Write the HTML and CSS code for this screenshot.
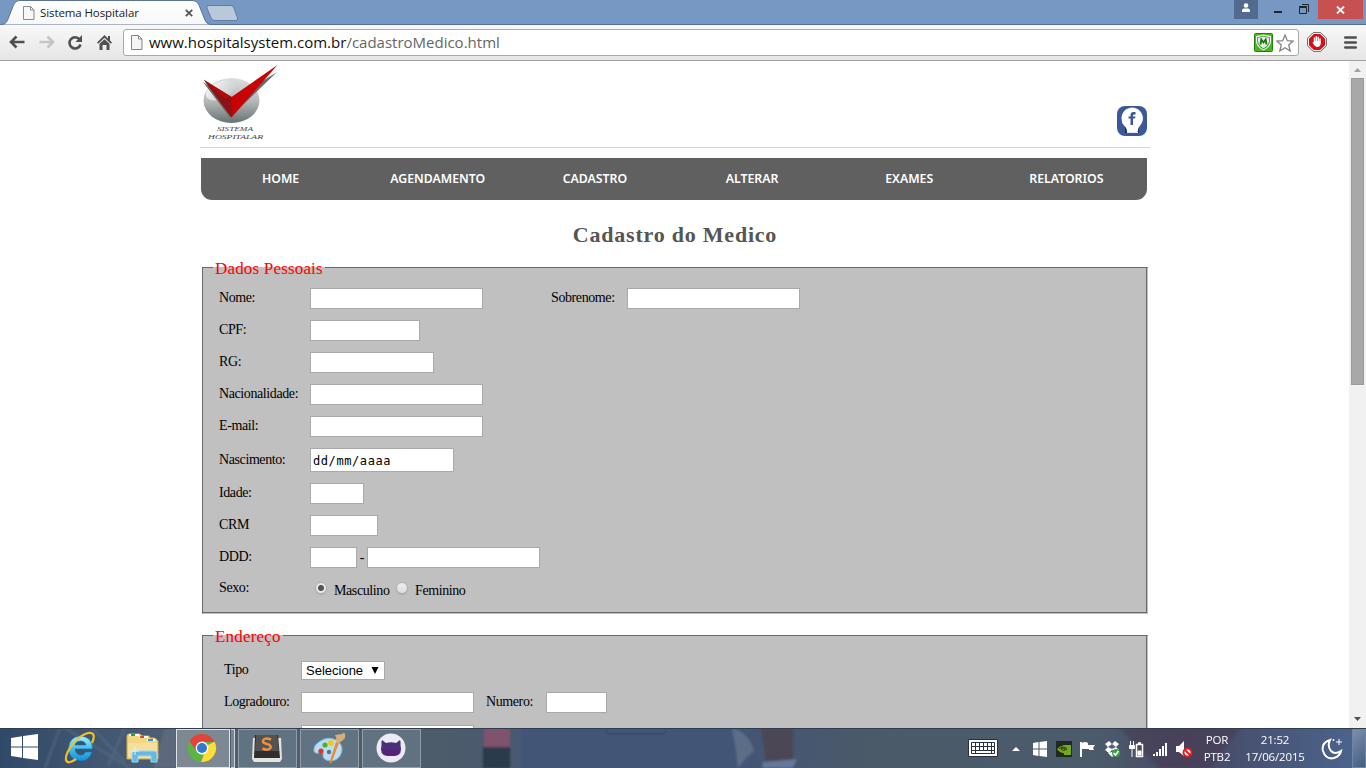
FILE: index.html
```html
<!DOCTYPE html>
<html lang="pt-BR">
<head>
<meta charset="utf-8">
<title>Sistema Hospitalar</title>
<link rel="stylesheet" href="styles.css">
</head>
<body>
<div class="screen">
  <header class="titlebar">
    <div class="tab">
      <svg class="tab-shape" width="240" height="25" viewBox="0 0 240 25">
        <defs><linearGradient id="tabfill" x1="0" y1="0" x2="0" y2="1"><stop offset="0" stop-color="#fff"/><stop offset="1" stop-color="#f7f7f7"/></linearGradient></defs>
        <path d="M0 25 V24.500 C5 24.500 6.500 23 8 19 L13.500 5 Q15.500 .5 19 .5 H193 Q197 .5 199 5 L204.500 19 Q206.500 24.500 211 24.500 V25Z" fill="url(#tabfill)" stroke="#5a7396"/>
        <path d="M208 5.500 H231 Q233 5.500 234 8 L237.500 18 Q238 20.500 236 20.500 H215 Q212 20.500 211 18 L207 8 Q206.500 5.500 208 5.500Z" fill="#b9c8da" stroke="#617da4"/>
      </svg>
      <svg class="tab-page" width="12" height="14" viewBox="0 0 12 14"><path d="M.5.500H7.500L11 4V13.500H.5ZM7.500.500V4H11" fill="#f7f7f7" stroke="#8a8a8a"/></svg>
      <span class="tab-title">Sistema Hospitalar</span>
      <svg class="tab-close" width="8" height="8" viewBox="0 0 8 8"><path d="M.8.8 7.200 7.200M7.200.8.8 7.200" stroke="#555" stroke-width="1.800"/></svg>
    </div>
    <div class="window-buttons">
      <span class="user-button"><svg width="10" height="10" viewBox="0 0 10 10" fill="#fff"><circle cx="5" cy="2.500" r="2.300"/><path d="M1 9V7.500Q1 5.500 3 5.500H7Q9 5.500 9 7.500V9Z"/></svg></span>
      <span class="min-button"></span>
      <svg class="restore-button" width="11" height="10" viewBox="0 0 11 10" fill="none" stroke="#20242b"><path d="M.5 3.500H7.500V9.500H.5ZM0 2.500H8M3 .5H9.500V8"/></svg>
      <span class="close-button"><svg width="9" height="8" viewBox="0 0 9 8"><path d="M1 .5 8 7.500M8 .5 1 7.500" stroke="#fff" stroke-width="1.800"/></svg></span>
    </div>
  </header>

  <div class="toolbar">
    <svg class="nav-icon" width="16" height="14" viewBox="0 0 16 14" fill="none" stroke="#505050" stroke-width="2.600"><path d="M2 7H15.500M7.500 1.500 2 7 7.500 12.500"/></svg>
    <svg class="nav-icon forward" width="16" height="14" viewBox="0 0 16 14" fill="none" stroke="#c5c5c5" stroke-width="2.600"><path d="M.5 7H14M8.500 1.500 14 7 8.500 12.500"/></svg>
    <svg class="nav-icon reload" width="16" height="15" viewBox="0 0 16 15"><path d="M12.500 4.300A5.600 5.600 0 1 0 13.500 9.500" fill="none" stroke="#505050" stroke-width="2.600"/><path d="M15 0V7H8.500Z" fill="#505050"/></svg>
    <svg class="nav-icon home" width="15" height="15" viewBox="0 0 15 15" fill="#505050"><path d="M7.500 0 0 7.500 1.200 8.700 7.500 2.800 13.800 8.700 15 7.500 13 5.500V1H11V3.500Z"/><path d="M2.500 8.800 7.500 4.200 12.500 8.800V15H9.500V10H5.500V15H2.500Z"/></svg>
    <div class="address">
      <svg class="page-icon" width="12" height="15" viewBox="0 0 12 15"><path d="M.5.500H7.500L11 4V14.500H.5ZM7.500.500V4H11" fill="#f4f4f4" stroke="#858585"/></svg>
      <span class="url">www.hospitalsystem.com.br<span class="url-path">/cadastroMedico.html</span></span>
      <svg class="shield" width="19" height="19" viewBox="0 0 19 19"><rect x=".5" y=".5" width="18" height="18" rx="1" fill="#46b51e" stroke="#24810e"/><path d="M2 3 9.500 1.500 17 3V9Q16 14.500 9.500 17.500 3 14.500 2 9Z" fill="#f0f5ee"/><path d="M3.200 4.200 9.500 2.800 15.800 4.200V9Q14.800 13.800 9.500 16.300 4.200 13.800 3.200 9Z" fill="#369022"/><path d="M4 4.800 9.500 3.600 15 4.800V8.500Q14 13 9.500 15.300 5 13 4 8.500Z" fill="#e4eee0"/><path d="M6.500 11.500 7.300 6.500 9.500 9.500 11.700 6.500 12.500 11.500" fill="none" stroke="#236e19" stroke-width="1.800"/></svg>
      <svg class="star" width="18" height="18" viewBox="0 0 18 18"><path d="M9 1 11.300 6.700 17.200 7.100 12.700 11 14.200 17 9 13.700 3.800 17 5.300 11 .8 7.100 6.700 6.700Z" fill="#fff" stroke="#858585" stroke-width="1.300"/></svg>
    </div>
    <svg class="adblock" width="20" height="20" viewBox="0 0 20 20"><path d="M6.200.6H13.800L19.400 6.200V13.800L13.800 19.400H6.200L.6 13.800V6.200Z" fill="#fff" stroke="#666"/><path d="M6.800 2H13.200L18 6.800V13.200L13.200 18H6.800L2 13.200V6.800Z" fill="#d80f14"/><path d="M7.500 10.500V6M9.300 10V4.800M11.200 10V5.300M13 10.500V7" stroke="#fff" stroke-width="1.400" stroke-linecap="round"/><path d="M6.800 9H13.700V12Q13 15 10.500 15 8 15 5.500 10.500L6.500 10 7 10.500Z" fill="#fff"/></svg>
    <svg class="menu" width="13" height="13" viewBox="0 0 13 13"><path d="M1.200 1.500H11.800M1.200 6.500H11.800M1.200 11.500H11.800" stroke="#505050" stroke-width="2.600" stroke-linecap="round"/></svg>
  </div>

  <div class="viewport">
    <main class="page">
      <div class="brand">
        <svg class="logo" width="78" height="78" viewBox="0 0 78 78">
          <defs>
            <linearGradient id="ball" x1="0" y1="0" x2="0" y2="1"><stop offset="0" stop-color="#dedede"/><stop offset=".5" stop-color="#b7baba"/><stop offset="1" stop-color="#687273"/></linearGradient>
            <linearGradient id="gloss" x1="0" y1="0" x2="1" y2="1"><stop offset="0" stop-color="#fff"/><stop offset="1" stop-color="#c6c8c8"/></linearGradient>
          </defs>
          <ellipse cx="31.500" cy="35.500" rx="28" ry="22.500" fill="url(#ball)"/>
          <ellipse cx="20" cy="25.500" rx="15" ry="8.500" transform="rotate(-24 20 25.500)" fill="url(#gloss)" opacity=".85"/>
          <path d="M3 17 30 52.500 77 7 31 36Z" fill="#656b6b"/>
          <path d="M4 15 31.500 32 77.500 0 31.500 52.500Z" fill="#c80306"/>
          <path d="M31.500 32V52.500L4 15Z" fill="#8d1216"/>
          <path d="M4 15 31.500 32 26 34Z" fill="#b50a0d"/>
          <text x="17" y="66" class="logo-text" textLength="36" lengthAdjust="spacingAndGlyphs">SISTEMA</text>
          <text x="8" y="73.500" class="logo-text" textLength="55" lengthAdjust="spacingAndGlyphs">HOSPITALAR</text>
        </svg>
        <svg class="facebook" width="30" height="30" viewBox="0 0 30 30"><rect width="30" height="30" rx="8" fill="#3b5998"/><path d="M8 20H22V27H8Z" fill="#1e3157"/><path d="M4.500 12.500A10.700 10.700 0 1 1 23.500 19Q20.500 22 20.500 26H10Q10 22 7 19.500 4.500 17 4.500 12.500Z" fill="#fff"/><path d="M10 26.500H21" stroke="#e5e9ef"/><path d="M13.500 19V12.500H11.500V10.500H13.500V9Q13.500 6 16.500 6H18.500V8.500H17.500Q16 8.500 16 9.500V10.500H18.500L18 12.500H16V19Z" fill="#3b5998"/></svg>
      </div>
      <nav class="main-nav"><a>HOME</a><a>AGENDAMENTO</a><a>CADASTRO</a><a>ALTERAR</a><a>EXAMES</a><a>RELATORIOS</a></nav>
      <h1 class="heading">Cadastro do Medico</h1>
      <fieldset class="group personal">
        <legend class="legend">Dados Pessoais</legend>
        <div class="row"><label class="label">Nome:</label><span class="field w173"></span><label class="label second">Sobrenome:</label><span class="field w173"></span></div>
        <div class="row"><label class="label">CPF:</label><span class="field w110"></span></div>
        <div class="row"><label class="label">RG:</label><span class="field w124"></span></div>
        <div class="row"><label class="label">Nacionalidade:</label><span class="field w173"></span></div>
        <div class="row"><label class="label">E-mail:</label><span class="field w173"></span></div>
        <div class="row date-row"><label class="label">Nascimento:</label><span class="field date">dd/mm/aaaa</span></div>
        <div class="row"><label class="label">Idade:</label><span class="field w54"></span></div>
        <div class="row"><label class="label">CRM</label><span class="field w68"></span></div>
        <div class="row"><label class="label">DDD:</label><span class="field w47"></span><span class="dash">-</span><span class="field w173"></span></div>
        <div class="row gender"><label class="label">Sexo:</label><span class="radio checked"></span><span class="option male">Masculino</span><span class="radio"></span><span class="option">Feminino</span></div>
      </fieldset>
      <fieldset class="group location">
        <legend class="legend">Endereço</legend>
        <div class="row type-row"><label class="label">Tipo</label><span class="select">Selecione<svg width="8" height="7" viewBox="0 0 8 7"><path d="M.5 0H7.500L4 7Z"/></svg></span></div>
        <div class="row street-row"><label class="label">Logradouro:</label><span class="field w173"></span><label class="label number">Numero:</label><span class="field w61"></span></div>
        <div class="row"><label class="label"></label><span class="field w173"></span></div>
      </fieldset>
    </main>
    <aside class="scrollbar">
      <svg width="7" height="4" viewBox="0 0 7 4"><path d="M0 4 3.500 0 7 4Z" fill="#a0a0a0"/></svg>
      <span class="thumb"></span>
      <svg class="down" width="7" height="4" viewBox="0 0 7 4"><path d="M0 0 3.500 4 7 0Z" fill="#505050"/></svg>
    </aside>
  </div>

  <footer class="taskbar">
    <svg class="wallpaper" width="1366" height="40" viewBox="0 0 1366 40">
      <defs>
        <linearGradient id="wall"><stop offset="0" stop-color="#314969"/><stop offset=".12" stop-color="#4c5f75"/><stop offset=".32" stop-color="#4c5c6b"/><stop offset=".37" stop-color="#4a5971"/><stop offset=".54" stop-color="#435576"/><stop offset=".64" stop-color="#4b5a68"/><stop offset=".8" stop-color="#4c5b6c"/><stop offset=".87" stop-color="#474863"/><stop offset="1" stop-color="#4b6590"/></linearGradient>
        <filter id="soft"><feGaussianBlur stdDeviation="1"/></filter>
      </defs>
      <path d="M0 0H1366V40H0Z" fill="url(#wall)"/>
      <g filter="url(#soft)">
        <path d="M65 0 130 40M92 0 125 34M125 0 108 38M45 40 60 0" stroke="#607b93" stroke-width="3" opacity=".35"/>
        <path d="M165 0 153 40H176V0Z" fill="#5c697b"/>
        <path d="M484 0H510V19H484Z" fill="#7f536c"/><path d="M483 19H510V40H483Z" fill="#2c3b4c"/>
        <path d="M522 0H733Q750 11 754 40H522Z" fill="#435576"/>
        <path d="M732 0Q750 5 754 23L744 32 738 40 736 22Z" fill="#5b6e87"/>
        <path d="M761 0H793V34H766Z" fill="#4c4755"/><path d="M763 34 797 31 793 40H762Z" fill="#65779a"/>
        <path d="M1120 0H1240L1210 40H1160Z" fill="#493d51" opacity=".6"/>
      </g>
      <path d="M0 .5H1366" stroke="#303d4e"/><path d="M606 0V3Q606 6 610 6H661Q666 6 667 0" fill="none" stroke="#334768"/>
    </svg>
    <div class="launchers">
      <svg class="start" width="27" height="26" viewBox="0 0 27 26" fill="#fff"><path d="M0 4 11 2.300V12.500H0ZM12 2.100 27 0V12.500H12ZM0 13.500H11V23.700L0 22ZM12 13.500H27V26L12 23.900Z"/></svg>
      <svg class="explorer" width="32" height="34" viewBox="0 0 32 34"><defs><linearGradient id="ie" x1="0" y1="0" x2="0" y2="1"><stop offset="0" stop-color="#aaf0ff"/><stop offset=".5" stop-color="#42bff2"/><stop offset="1" stop-color="#158ed5"/></linearGradient></defs><path d="M28.500 19H11Q12 25 17 25 20 25 21.500 22H28Q25 31 16.500 31 5 30 4.500 18.500 5 7 16.500 6 28.500 7 28.500 19ZM11 15H22Q21 11 16.500 11 12 11 11 15Z" fill="url(#ie)" stroke="#0b74af" stroke-width=".6"/><path d="M28 13Q33 2 24 3 16 5 9 14 1 24 2 30 4 35 12 29" fill="none" stroke="#f3bd27" stroke-width="2.200"/></svg>
      <svg class="folder" width="34" height="31" viewBox="0 0 34 31"><path d="M1 4Q1 2 3 2H14L16 4H23L24 6H29L32 9V27H1Z" fill="#f3d681" stroke="#d5a749"/><path d="M3 2H13V4H3M13 4H22V6H13M21 7H29V9H21" fill="#fff"/><path d="M5 3H9" stroke="#2b9d48" stroke-width="2"/><path d="M14 5H18" stroke="#df4832" stroke-width="2"/><path d="M22 8H27" stroke="#348ee5" stroke-width="2"/><path d="M2 11H31V26H2Z" fill="#f6df9b"/><path d="M6 30V22Q6 19 9 19H28Q31 19 31 22V30H25V24H12V30Z" fill="#68b9e1" stroke="#96dcfa"/><path d="M9 15V23M5 19H13" stroke="#d8f5ff"/></svg>
      <span class="app active"><svg width="30" height="30" viewBox="0 0 30 30"><circle cx="15" cy="15" r="14" fill="#60b545"/><path d="M15 15 27.500 8.700A14 14 0 0 1 14 29Z" fill="#ffdc36"/><path d="M2.500 8.500A14 14 0 0 1 27.500 9H15L9 18Z" fill="#e34338"/><path d="M9 18 14 21.500H17L14 29A14 14 0 0 1 2.500 8.500Z" fill="#5bb545"/><circle cx="15" cy="15" r="6.400" fill="#fff"/><circle cx="15" cy="15" r="5" fill="#3378ca"/></svg></span><span class="stack-edge"></span>
      <span class="app"><svg width="32" height="30" viewBox="0 0 32 30"><path d="M2 5H30L31 26 29 29H3L1 26Z" fill="#e3e3df"/><path d="M4 2H27L29 25H3Z" fill="#302e2d"/><path d="M5 2H26L28 18H4Z" fill="#555352"/><path d="M20 6.500Q12.500 4 12 8 11.500 10 16 11 20.500 12 19.500 15 17 18 11.500 15.500" fill="none" stroke="#ef923b" stroke-width="2.500"/></svg></span>
      <span class="app"><svg width="34" height="34" viewBox="0 0 34 34"><path d="M7 11Q16 4 26 10 33 17 28 25 23 32 14 29 10 27 11 23 11 20 7 22 1 23 2 18 2 14 7 11Z" fill="#b9def4" stroke="#7bb9d9"/><circle cx="9" cy="20" r="2.600" fill="#e2342a"/><circle cx="13" cy="14" r="2.600" fill="#45b336"/><circle cx="19" cy="12" r="3" fill="#f2c524"/><circle cx="17" cy="21" r="2.200" fill="#54758e"/><path d="M27 12 19 33 17.500 31.500 24 11Z" fill="#ed8935"/><path d="M24 10Q25 7 23 4L30 3Q34 0 33 7 30 11 26 12Z" fill="#d6ae7b"/></svg></span>
      <span class="app"><svg width="30" height="30" viewBox="0 0 30 30"><circle cx="15" cy="15" r="14.500" fill="#eceaf5"/><path d="M6 7 10 10Q15 8.500 20 10L24 7Q25 9 24.500 12 27 22 19 23H11Q3 22 5.500 12 5 9 6 7Z" fill="#493078"/><path d="M7 16H23Q24 21 18 22H12Q6 21 7 16Z" fill="#5a207f"/></svg></span>
    </div>
    <div class="tray">
      <svg class="keyboard" width="30" height="18" viewBox="0 0 30 18"><path d="M.5.500H29.500V17.500H.5Z" fill="#fff" stroke="#26303f"/><path d="M3.500 3.500H26.500V14.500H3.500ZM3.500 7.500H26.500M3.500 11.500H26.500M7.500 3V15M11.500 3V11M15.500 3V11M19.500 3V11M23.500 3V15" fill="none" stroke="#26303f"/></svg>
      <svg class="tray-icon" viewBox="0 0 24 24"><path d="M8 14 12 10 16 14Z" fill="#fff"/></svg>
      <svg class="tray-icon" viewBox="0 0 24 24" fill="#fff"><path d="M5 6 10.500 5V11.500H5ZM11.500 5 19 4V11.500H11.500ZM5 12.500H10.500V19L5 18ZM11.500 12.500H19V20L11.500 19Z"/></svg>
      <svg class="tray-icon" viewBox="0 0 24 24"><path d="M4 4H20V20H4Z" fill="#202822"/><path d="M5 12Q11 5 18 12 11 20 5 12ZM11 8H19V18H12" fill="#76a916"/><path d="M7 12Q11 8 15 12 11 15 9 12 11 10 13 12" fill="none" stroke="#253a17"/></svg>
      <svg class="tray-icon" viewBox="0 0 24 24"><path d="M5 5V20" stroke="#fff" stroke-width="2"/><path d="M6 6Q9 4 12 6V8H19L17 11 18 13H13V12H6Z" fill="#fff"/></svg>
      <svg class="tray-icon" viewBox="0 0 24 24"><path d="M5 7 9 4 12 7 15 4 19 7 16 10 19 13 15 15 12 13 9 16 5 13 8 10ZM8 16 12 15 16 17 12 20Z" fill="#fff"/><path d="M8 10 12 7 16 10 12 12Z" fill="#526277"/><circle cx="16" cy="16" r="4" fill="#35a33c"/><path d="M13.500 16 15.500 18 18.500 14" stroke="#fff" stroke-width="1.500" fill="none"/></svg>
      <svg class="tray-icon" viewBox="0 0 24 24" fill="none" stroke="#fff"><path d="M6.500 4V8M9.500 4V8M8 12V20"/><path d="M5.500 8.500H10.500V11.500H5.500Z" fill="#fff"/><path d="M12.500 7.500H18.500V19.500H12.500ZM14 6H17" stroke-width="1.500"/><path d="M14 14H17V18H14Z" fill="#fff"/></svg>
      <svg class="tray-icon" viewBox="0 0 24 24"><path d="M6 17V19M9 15V19M12 12V19M15 9V19M18 6V19" stroke="#fff" stroke-width="2"/></svg>
      <svg class="tray-icon" viewBox="0 0 24 24"><path d="M4 9H7L12 4V19L7 15H4Z" fill="#fff"/><circle cx="15.500" cy="15.500" r="4" fill="#fff" stroke="#e7191f" stroke-width="2"/><path d="M13 13 18 18" stroke="#e7191f" stroke-width="2"/></svg>
      <div class="tray-text language"><span>POR</span><span>PTB2</span></div>
      <div class="tray-text clock"><span>21:52</span><span>17/06/2015</span></div>
      <svg class="moon" width="23" height="22" viewBox="0 0 23 22"><path d="M9 2Q0 5 2 13 5 22 13 20 19 18 20 13 14 17 10 13 6 8 9 2Z" fill="none" stroke="#fff" stroke-width="2"/><path d="M18 1V7M15 4H21M12.500 1V3M11.500 2H13.500" stroke="#fff"/></svg>
      <span class="show-desktop"></span>
    </div>
  </footer>
</div>
</body>
</html>
```
FILE: styles.css
```css
* { box-sizing: border-box; }
body { margin: 0; overflow: hidden; font-family: "Liberation Serif", serif; }
svg { display: block; flex: none; }
.screen { width: 1366px; height: 768px; display: flex; flex-direction: column; background: #fff; }

.titlebar { height: 25px; flex: none; display: flex; justify-content: space-between; background: #7698c3; border-bottom: 1px solid #536f96; }
.tab { position: relative; width: 240px; height: 25px; display: flex; align-items: center; padding-left: 23px; font: 12px "Open Sans", sans-serif; color: #222; }
.tab-shape { position: absolute; left: 0; top: 0; }
.tab-page, .tab-title, .tab-close { position: relative; }
.tab-title { margin-left: 5px; width: 145px; font-size: 11.5px; letter-spacing: -.1px; }
.window-buttons { display: flex; align-items: flex-start; }
.user-button { width: 24px; height: 19px; background: #526a8e; display: flex; justify-content: center; padding-top: 3px; }
.min-button { width: 8px; height: 2px; background: #20242b; margin: 11px 17px 0 16px; }
.restore-button { margin: 4px 8px 0 0; }
.close-button { width: 45px; height: 19px; margin-right: 3px; background: #c75050; display: flex; align-items: center; justify-content: center; }

.toolbar { height: 36px; flex: none; display: flex; align-items: center; padding: 0 0 1px 9px; border-bottom: 1px solid #a0a0a0; background: linear-gradient(#f8f8f8, #e6e6e6); }
.forward { margin-left: 14px; }
.reload { margin-left: 12px; }
.home { margin-left: 14px; }
.address { width: 1176px; height: 27px; margin: 1px 0 0 11px; border: 1px solid #a9a9a9; border-radius: 3px; background: #fff; display: flex; align-items: center; padding-left: 7px; }
.url { margin: -1px 0 0 6px; flex: 1; font: 15px "Open Sans", sans-serif; color: #111; }
.url-path { color: #666; }
.star { margin: 0 4px 0 3px; }
.adblock { margin-left: 8px; }
.menu { margin-left: 17px; }

.viewport { flex: 1; min-height: 0; overflow: hidden; display: flex; justify-content: space-between; }
.page { width: 950px; margin-left: 200px; height: 667px; overflow: hidden; }
.brand { height: 87px; border-bottom: 1px solid #d3d3d3; display: flex; justify-content: space-between; }
.logo { margin-top: 4px; }
.logo-text { font: italic 7px "Liberation Serif", serif; fill: #444; }
.facebook { margin: 45px 3px 0 0; }
.main-nav { width: 946px; height: 42px; margin: 10px 0 0 1px; padding: 0 2px 0 1px; background: #606060; border-radius: 0 0 11px 11px; display: grid; grid-template-columns: repeat(6, 1fr); }
.main-nav a { color: #fff; font: 600 12.3px/41px "Noto Sans", "Open Sans", sans-serif; text-align: center; }
.heading { height: 58px; margin: 0; color: #555; font: bold 22px/69px "Liberation Serif", serif; letter-spacing: .78px; text-align: center; }
.group { width: 946px; margin: 0 0 0 2px; min-width: 0; background: #c0c0c0; border: 1px solid #696969; border-right-color: #c0c0c0; border-bottom-color: #c0c0c0; box-shadow: inset -1px -1px #696969; }
.legend { height: 19px; padding: 0 2px; color: #f00; font-size: 17px; line-height: 21px; letter-spacing: .18px; }
.personal { height: 356px; padding: 11px 10px 0; }
.location { height: 150px; margin-top: 12px; padding: 16px 10px 0; }
.row { height: 21px; margin-bottom: 11px; padding-left: 6px; display: flex; align-items: center; color: #000; font-size: 14px; letter-spacing: -.4px; }
.label { width: 91px; flex: none; line-height: 19px; height: 21px; white-space: nowrap; }
.second { width: 76px; margin-left: 68px; }
.location .row { padding-left: 11px; }
.location .label { width: 77px; }
.location .number { width: 60px; margin-left: 12px; }
.field { height: 21px; border: 1px solid #a9a9a9; background: #fff; }
.w173 { width: 173px; }
.w124 { width: 124px; }
.w110 { width: 110px; }
.w68 { width: 68px; }
.w61 { width: 61px; }
.w54 { width: 54px; }
.w47 { width: 47px; }
.date-row { height: 24px; }
.date { width: 144px; height: 24px; padding-left: 2px; font: 12px/24px "DejaVu Sans Mono", monospace; letter-spacing: .58px; }
.dash { width: 10px; text-align: center; }
.gender .label { line-height: 18px; }
.radio { width: 12px; height: 12px; margin: -3px 0 0 5px; border: 1px solid #b0b0b0; border-radius: 50%; background: linear-gradient(#eee, #ddd); box-shadow: 0 1px 1px #aaa; }
.checked { background: radial-gradient(circle, #555 0 2.7px, #e8e8e8 3.3px); }
.option { margin-left: 7px; line-height: 23px; height: 21px; }
.male { width: 58px; margin-right: -1px; }
.type-row { height: 19px; margin-bottom: 12px; }
.location .street-row { margin-bottom: 12px; }
.select { width: 84px; height: 19px; padding: 0 5px 0 4px; border: 1px solid #a9a9a9; background: #fff; display: flex; align-items: center; justify-content: space-between; font: 13px "Liberation Sans", sans-serif; letter-spacing: 0; }
.scrollbar { width: 17px; background: #f1f1f1; display: flex; flex-direction: column; align-items: center; padding-top: 7px; }
.thumb { width: 13px; height: 307px; margin-top: 6px; background: #a8a8a8; border: 1px solid #999; }
.down { margin: auto 0 7px; }

.taskbar { height: 40px; flex: none; position: relative; display: flex; justify-content: space-between; }
.wallpaper { position: absolute; left: 0; top: 0; }
.launchers { position: relative; display: flex; align-items: center; }
.start { margin: -2px 0 0 11px; }
.explorer { margin: -2px 0 0 26px; }
.folder { margin: -1px 0 0 30px; }
.app { width: 59px; height: 39px; margin: 1px 0 0 3px; padding: 0 2px 2px 0; border: 1px solid #929da8; background: rgba(125, 139, 153, .45); display: flex; align-items: center; justify-content: center; }
.active { width: 54px; margin-left: 16px; background: #7e8892; border-color: #e0e3e6; }
.stack-edge { width: 4px; height: 39px; margin: 1px 0 0 1px; border: 1px solid #d0d6dc; border-left: 0; background: #798490; }
.tray { position: relative; display: flex; align-items: center; }
.keyboard { margin-right: 6px; }
.tray-icon { width: 24px; height: 24px; margin-top: 2px; }
.tray-text { display: flex; flex-direction: column; align-items: center; color: #fff; font: 11.5px/17px "Open Sans", sans-serif; letter-spacing: -.15px; white-space: nowrap; }
.language { width: 42px; }
.clock { width: 74px; }
.moon { margin: 2px 8px 0 9px; }
.show-desktop { width: 14px; height: 39px; margin-top: 1px; border: 1px solid #6f86a2; background: linear-gradient(135deg, #7c8fac, #455d83); }
```
